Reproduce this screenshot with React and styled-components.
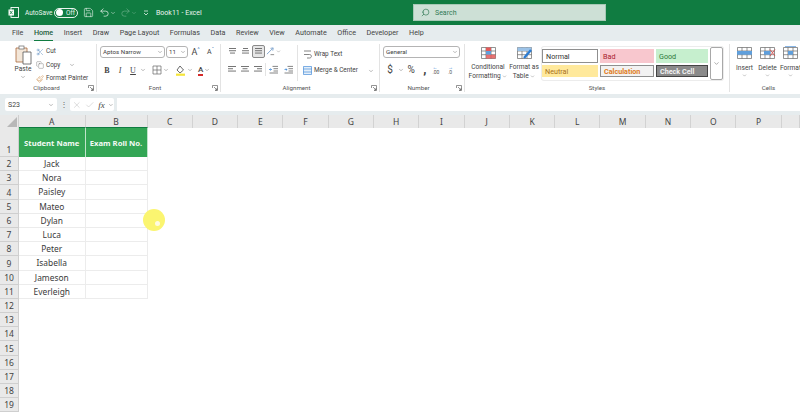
import React from 'react'
import styled, { createGlobalStyle } from 'styled-components'
import { Search, ChevronDown, Scissors, Copy, Paintbrush, Undo2, Redo2, X, Check, Save } from 'lucide-react'

const GlobalStyle = createGlobalStyle`
  html, body { margin: 0; padding: 0; background: #fff; overflow: hidden; }
  body { font-family: Roboto, "Noto Sans", sans-serif; color: #333; }
`

const tabs = ['File', 'Home', 'Insert', 'Draw', 'Page Layout', 'Formulas', 'Data', 'Review', 'View', 'Automate', 'Office', 'Developer', 'Help']
const students = ['Jack', 'Nora', 'Paisley', 'Mateo', 'Dylan', 'Luca', 'Peter', 'Isabella', 'Jameson', 'Everleigh']
const columns = ['C', 'D', 'E', 'F', 'G', 'H', 'I', 'J', 'K', 'L', 'M', 'N', 'O', 'P']

const Chev = ({ size = 6 }) => <ChevronDown size={size} strokeWidth={1.6} color="#555" />

const Launcher = () => (
  <LauncherBox width="6" height="6" viewBox="0 0 6 6">
    <path d="M.5 3V.5H5.5V5.5H3M2 2l3 3M5 3v2H3" fill="none" stroke="#666" strokeWidth=".7" />
  </LauncherBox>
)

const AlignIcon = ({ lines }) => (
  <svg width="9" height="9" viewBox="0 0 9 9">
    {lines.map((l, i) => (
      <rect key={i} x={l[0]} y={1 + i * 2.3} width={l[1]} height=".9" fill="#666" />
    ))}
  </svg>
)

const SheetIcon = ({ children }) => (
  <svg width="17" height="14" viewBox="0 0 17 14">
    <path d="M1.5 1.5H15.5V12.5H1.5ZM1.5 5H15.5M1.5 8.7H15.5M6 1.5V12.5M11 1.5V12.5" fill="#fff" stroke="#666" strokeWidth=".7" />
    {children}
  </svg>
)

function TitleBar() {
  return (
    <TopBar>
      <ExcelMark width="11" height="11" viewBox="0 0 11 11">
        <rect x="3" y=".5" width="7.5" height="10" fill="none" stroke="#fff" strokeWidth=".9" />
        <rect x=".5" y="2.5" width="5.5" height="6" fill="#fff" />
        <path d="M1.8 3.8 4.6 7.2M4.6 3.8 1.8 7.2" stroke="#107c41" strokeWidth=".8" />
      </ExcelMark>
      <AutoSave>AutoSave</AutoSave>
      <Toggle>
        <Knob />
        <span>Off</span>
      </Toggle>
      <QuickIcons>
        <QuickSlot><Save size={11} strokeWidth={1.3} color="#f2f8f4" /></QuickSlot>
        <QuickSlot offset={5}><Undo2 size={11} strokeWidth={1.5} color="#f2f8f4" /></QuickSlot>
        <QuickSlot><ChevronDown size={6} color="#e3efe8" /></QuickSlot>
        <QuickSlot offset={3.5}><Redo2 size={11} strokeWidth={1.4} color="#6fb18d" /></QuickSlot>
        <QuickSlot><ChevronDown size={6} color="#6fb18d" /></QuickSlot>
        <QuickSlot offset={6}>
          <svg width="6" height="6" viewBox="0 0 6 6">
            <path d="M1 1H5M1 3 3 5 5 3" fill="none" stroke="#e3efe8" strokeWidth=".8" />
          </svg>
        </QuickSlot>
      </QuickIcons>
      <DocName>Book11 - Excel</DocName>
      <SearchBox>
        <Search size={9} strokeWidth={1.6} color="#1f6b45" style={{ transform: 'scaleX(-1)' }} />
        <span>Search</span>
      </SearchBox>
    </TopBar>
  )
}

function Clipboard() {
  return (
    <Group width={92}>
      <GroupBody>
        <PasteCol>
          <svg width="17" height="20" viewBox="0 0 17 20">
            <path d="M1 3H12V17H1Z" fill="#f3e6d8" stroke="#a9683a" strokeWidth=".8" />
            <rect x="4" y="1" width="5" height="3" fill="#fff" stroke="#666" strokeWidth=".7" />
            <path d="M8 7H16V19H8Z" fill="#fff" stroke="#555" strokeWidth=".8" />
          </svg>
          <Caption>Paste</Caption>
          <Chev />
        </PasteCol>
        <ClipList>
          <ClipItem><Scissors size={8} strokeWidth={1.2} color="#3f78b5" />Cut</ClipItem>
          <ClipItem><Copy size={8} strokeWidth={1.1} color="#555" />Copy<CopyChev><Chev /></CopyChev></ClipItem>
          <ClipItem><Paintbrush size={8} strokeWidth={1.3} color="#c9823a" />Format Painter</ClipItem>
        </ClipList>
      </GroupBody>
      <GroupLabel>Clipboard<Launcher /></GroupLabel>
    </Group>
  )
}

function FontGroup() {
  return (
    <Group width={124} divided>
      <GroupBody>
        <Stack>
          <ToolRow>
            <Combo width={65}>Aptos Narrow<Chev /></Combo>
            <Combo width={22}>11<Chev /></Combo>
            <GrowFont>A<sup>^</sup></GrowFont>
            <GrowFont small>A<sup>ˇ</sup></GrowFont>
          </ToolRow>
          <ToolRow tight>
            <StyleBtn bold>B</StyleBtn>
            <StyleBtn italic>I</StyleBtn>
            <StyleBtn underline>U</StyleBtn>
            <Chev />
            <svg width="10" height="10" viewBox="0 0 10 10" style={{ marginLeft: 5 }}>
              <path d="M1 1H9V9H1ZM5 1V9M1 5H9" fill="none" stroke="#666" strokeWidth=".7" />
            </svg>
            <Chev />
            <svg width="11" height="11" viewBox="0 0 11 11" style={{ marginLeft: 5 }}>
              <path d="M5 1 8.5 5 5 8 2 5Z" fill="none" stroke="#444" strokeWidth=".8" />
              <rect x="1" y="8.6" width="9" height="2.2" fill="#f5e53a" />
            </svg>
            <Chev />
            <ColorA>A</ColorA>
            <Chev />
          </ToolRow>
        </Stack>
      </GroupBody>
      <GroupLabel>Font<Launcher /></GroupLabel>
    </Group>
  )
}

function Alignment() {
  return (
    <Group width={159} divided>
      <GroupBody>
        <AlignGrid>
          <AlignCell><AlignIcon lines={[[1, 7], [1, 7], [2, 5]]} /></AlignCell>
          <AlignCell><AlignIcon lines={[[2, 5], [1, 7], [1, 7]]} /></AlignCell>
          <AlignCell selected><AlignIcon lines={[[1, 7], [1, 7], [1, 7]]} /></AlignCell>
          <AlignCell>
            <svg width="9" height="9" viewBox="0 0 10 10">
              <path d="M1 8 7 2M5 1.5 8 1l-.5 3" fill="none" stroke="#3f78b5" strokeWidth=".7" />
              <path d="M5 8.5h4" stroke="#666" strokeWidth=".8" />
            </svg>
            <Chev size={5} />
          </AlignCell>
          <AlignCell />
          <AlignCell><AlignIcon lines={[[0, 8], [0, 5], [0, 8]]} /></AlignCell>
          <AlignCell><AlignIcon lines={[[0, 8], [1.5, 5], [0, 8]]} /></AlignCell>
          <AlignCell><AlignIcon lines={[[0, 8], [3, 5], [0, 8]]} /></AlignCell>
          <AlignCell ruled>
            <svg width="9" height="9" viewBox="0 0 9 9">
              <path d="M3.5 1.4H9M4.5 3.7H9M4.5 6H9M.5 8H9" stroke="#666" strokeWidth=".8" />
              <path d="M3 4.5H.5M1.6 3.4.5 4.5 1.6 5.6" fill="none" stroke="#2b7cd3" strokeWidth=".7" />
            </svg>
          </AlignCell>
          <AlignCell>
            <svg width="9" height="9" viewBox="0 0 9 9">
              <path d="M3.5 1.4H9M4.5 3.7H9M4.5 6H9M.5 8H9" stroke="#666" strokeWidth=".8" />
              <path d="M.5 4.5H3M1.9 3.4 3 4.5 1.9 5.6" fill="none" stroke="#2b7cd3" strokeWidth=".7" />
            </svg>
          </AlignCell>
        </AlignGrid>
        <MergeCol>
          <ClipItem>
            <svg width="9" height="9" viewBox="0 0 9 9">
              <path d="M1 1H8M1 4.5H6.5C9 4.5 9 8 6.5 8H4" fill="none" stroke="#666" strokeWidth=".8" />
            </svg>
            Wrap Text
          </ClipItem>
          <ClipItem>
            <svg width="9" height="9" viewBox="0 0 9 9">
              <path d="M.5.5H8.5V8.5H.5ZM.5 3H8.5M.5 6H8.5" fill="#e5eff9" stroke="#2b7cd3" strokeWidth=".6" />
            </svg>
            Merge &amp; Center
            <MergeChev><Chev /></MergeChev>
          </ClipItem>
        </MergeCol>
      </GroupBody>
      <GroupLabel>Alignment<Launcher /></GroupLabel>
    </Group>
  )
}

function NumberGroup() {
  return (
    <Group width={85} divided>
      <GroupBody>
        <Stack>
          <Combo width={77}>General<Chev /></Combo>
          <ToolRow number>
            <NumGlyph>$</NumGlyph>
            <Chev />
            <NumGlyph>%</NumGlyph>
            <NumGlyph heavy>,</NumGlyph>
            <Decimal><i>←</i>.00</Decimal>
            <Decimal><i>→</i>.0</Decimal>
          </ToolRow>
        </Stack>
      </GroupBody>
      <GroupLabel>Number<Launcher /></GroupLabel>
    </Group>
  )
}

function Styles() {
  return (
    <Group width={265} divided>
      <GroupBody>
        <BigButton width={40}>
          <SheetIcon>
            <rect x="6" y="1.5" width="5" height="3.5" fill="#e45a5a" />
            <rect x="6" y="5" width="5" height="3.7" fill="#5f9fdc" />
            <rect x="6" y="8.7" width="9.5" height="3.8" fill="#e45a5a" opacity=".85" />
          </SheetIcon>
          <Caption>Conditional</Caption>
          <Caption>Formatting <Inline><Chev size={5} /></Inline></Caption>
        </BigButton>
        <BigButton width={30}>
          <SheetIcon>
            <rect x="1.5" y="1.5" width="14" height="3.5" fill="#9cc3e8" />
            <path d="M8 12 15 4" stroke="#2b7cd3" strokeWidth="2.4" />
          </SheetIcon>
          <Caption>Format as</Caption>
          <Caption>Table <Inline><Chev size={5} /></Inline></Caption>
        </BigButton>
        <Gallery>
          <StyleGrid>
            <Swatch kind="normal">Normal</Swatch>
            <Swatch kind="bad">Bad</Swatch>
            <Swatch kind="good">Good</Swatch>
            <Swatch kind="neutral">Neutral</Swatch>
            <Swatch kind="calc">Calculation</Swatch>
            <Swatch kind="check">Check Cell</Swatch>
          </StyleGrid>
          <GalleryMore><Chev size={7} /></GalleryMore>
        </Gallery>
      </GroupBody>
      <GroupLabel center>Styles</GroupLabel>
    </Group>
  )
}

function Cells() {
  return (
    <Group width={71} divided>
      <GroupBody>
        <CellButton>
          <SheetIcon><rect x="1" y="5" width="15" height="3.7" fill="#5f9fdc" /></SheetIcon>
          <Caption>Insert</Caption><Chev size={5} />
        </CellButton>
        <CellButton>
          <SheetIcon>
            <rect x="5" y="5" width="6.5" height="3.7" fill="#5f9fdc" />
            <path d="M11 3.5 16 10M16 3.5 11 10" stroke="#d9534f" strokeWidth=".9" />
          </SheetIcon>
          <Caption>Delete</Caption><Chev size={5} />
        </CellButton>
        <CellButton>
          <SheetIcon>
            <rect x="6" y="5" width="5" height="3.7" fill="#5f9fdc" />
            <path d="M3 .3H14" stroke="#2b7cd3" strokeWidth=".7" />
          </SheetIcon>
          <Caption>Format</Caption><Chev size={5} />
        </CellButton>
      </GroupBody>
      <GroupLabel shifted>Cells</GroupLabel>
    </Group>
  )
}

function App() {
  return (
    <Page>
      <GlobalStyle />
      <TitleBar />
      <TabRow>
        {tabs.map((t) => (
          <Tab key={t} $active={t === 'Home'}>{t}</Tab>
        ))}
      </TabRow>
      <Ribbon>
        <Clipboard />
        <FontGroup />
        <Alignment />
        <NumberGroup />
        <Styles />
        <Cells />
      </Ribbon>
      <FormulaBar>
        <NameBox>S23<Chev /></NameBox>
        <Dots>⋮</Dots>
        <FxBox>
          <X size={10} strokeWidth={1} color="#aaa" />
          <Check size={10} strokeWidth={1} color="#aaa" />
          <Fx>fx</Fx>
          <Chev />
        </FxBox>
        <FormulaInput />
      </FormulaBar>
      <Sheet>
        <Corner><Triangle /></Corner>
        <ColHead $active>A</ColHead>
        <ColHead $active>B</ColHead>
        {columns.map((c) => <ColHead key={c}>{c}</ColHead>)}
        <ColHead />

        <RowHead>1</RowHead>
        <HeaderCell>Student Name</HeaderCell>
        <HeaderCell>Exam Roll No.</HeaderCell>
        <Blank />

        {students.map((name, i) => (
          <React.Fragment key={name}>
            <RowHead>{i + 2}</RowHead>
            <DataCell>{name}</DataCell>
            <DataCell />
            <Blank />
          </React.Fragment>
        ))}

        {[12, 13, 14, 15, 16, 17, 18, 19].map((n) => (
          <React.Fragment key={n}>
            <RowHead>{n}</RowHead>
            <Blank $wide />
          </React.Fragment>
        ))}
      </Sheet>
      <Pointer>
        <PointerDot />
      </Pointer>
    </Page>
  )
}

const Page = styled.div`
  position: relative;
  width: 800px;
  height: 415px;
  overflow: hidden;
  background: #fff;
`

const TopBar = styled.div`
  height: 25px;
  background: #107c41;
  display: flex;
  align-items: center;
  padding-left: 8px;
  color: #eaf4ee;
  font-size: 7px;
`

const ExcelMark = styled.svg`
  margin-right: 6px;
`

const AutoSave = styled.span`
  width: 29px;
  font-size: 6.5px;
  white-space: nowrap;
`

const Toggle = styled.div`
  width: 24px;
  height: 10px;
  box-sizing: border-box;
  border: 1px solid #eaf4ee;
  border-radius: 6px;
  display: flex;
  align-items: center;
  gap: 3px;
  padding-left: 1px;
  font-size: 6.5px;
`

const Knob = styled.div`
  width: 7px;
  height: 7px;
  border-radius: 50%;
  background: #fff;
`

const QuickIcons = styled.div`
  display: flex;
  align-items: center;
  margin-left: 5px;
  width: 73px;
  flex: none;
`

const QuickSlot = styled.span`
  display: flex;
  margin-left: ${(p) => p.offset || 0}px;
`

const DocName = styled.span`
  width: 257px;
  flex: none;
  white-space: nowrap;
  font-size: 7px;
`

const SearchBox = styled.div`
  width: 193px;
  height: 17px;
  box-sizing: border-box;
  background: #cde0d6;
  border: 1px solid #a7c9b6;
  display: flex;
  align-items: center;
  gap: 5px;
  padding-left: 7px;
  color: #2f7a55;
  font-size: 7px;
`

const TabRow = styled.div`
  height: 16px;
  background: #e6ecee;
  display: flex;
  align-items: center;
  gap: 10.6px;
  padding-left: 12px;
  font-size: 7.2px;
  color: #444;
`

const Tab = styled.span`
  line-height: 16px;
  white-space: nowrap;
  font-weight: ${(p) => (p.$active ? 500 : 400)};
  color: ${(p) => (p.$active ? '#1e5c3c' : '#444')};
  border-bottom: ${(p) => (p.$active ? '1.5px solid #107c41' : 'none')};
  box-sizing: border-box;
  height: 16px;
`

const Ribbon = styled.div`
  height: 53px;
  margin-left: 4px;
  background: #fff;
  border-radius: 4px 0 0 4px;
  display: flex;
  padding: 3px 0 2px;
  box-sizing: border-box;
`

const Group = styled.div`
  box-sizing: border-box;
  width: ${(p) => p.width}px;
  flex: none;
  display: flex;
  flex-direction: column;
  border-left: ${(p) => (p.divided ? '1px solid #e3e3e3' : 'none')};
`

const GroupBody = styled.div`
  flex: 1;
  display: flex;
  min-height: 0;
  padding: 1px 3px 0;
`

const GroupLabel = styled.div`
  height: 9px;
  display: flex;
  align-items: center;
  justify-content: center;
  padding: ${(p) => (p.center ? '0' : p.shifted ? '0 0 0 7px' : '0 7px 0 0')};
  font-size: 6.2px;
  color: #555;
  position: relative;
  white-space: nowrap;
`

const LauncherBox = styled.svg`
  position: absolute;
  right: 2px;
  top: 2px;
`

const Caption = styled.span`
  font-size: 6.6px;
  line-height: 9px;
  white-space: nowrap;
  color: #444;
`

const Inline = styled.span`
  display: inline-flex;
  vertical-align: middle;
`

const PasteCol = styled.div`
  width: 26px;
  margin-left: 3px;
  display: flex;
  flex-direction: column;
  align-items: center;
`

const ClipList = styled.div`
  padding-top: 2px;
  display: flex;
  flex-direction: column;
  gap: 4.5px;
`

const ClipItem = styled.div`
  display: flex;
  align-items: center;
  gap: 2px;
  font-size: 6.4px;
  line-height: 9px;
  white-space: nowrap;
  color: #444;
`

const CopyChev = styled.span`
  display: flex;
  margin-left: 7px;
`

const Stack = styled.div`
  display: flex;
  flex-direction: column;
  gap: 6px;
  padding-top: 1px;
`

const ToolRow = styled.div`
  display: flex;
  align-items: center;
  gap: 1px;
  height: 12px;
  padding-left: ${(p) => (p.tight ? '1px' : '0')};
  ${(p) => p.number && 'padding-left: 1px; gap: 1.6px;'}
`

const Combo = styled.div`
  width: ${(p) => p.width}px;
  height: 12px;
  box-sizing: border-box;
  border: 1px solid #b4b4b4;
  border-radius: 3px;
  padding: 0 1px 0 2px;
  display: flex;
  align-items: center;
  justify-content: space-between;
  font-size: 6.2px;
  color: #444;
  background: #fff;
`

const GrowFont = styled.span`
  font-size: ${(p) => (p.small ? '7px' : '9px')};
  width: ${(p) => (p.small ? '15px' : '13px')};
  text-align: center;
  color: #444;
  sup {
    font-size: 5px;
    color: #3f78b5;
    line-height: 0;
  }
`

const StyleBtn = styled.span`
  width: 12px;
  text-align: center;
  font-size: 8px;
  color: #444;
  font-family: "Liberation Serif", serif;
  font-weight: ${(p) => (p.bold ? 700 : 400)};
  font-style: ${(p) => (p.italic ? 'italic' : 'normal')};
  text-decoration: ${(p) => (p.underline ? 'underline' : 'none')};
`

const ColorA = styled.span`
  margin-left: 4px;
  font-size: 8px;
  line-height: 9px;
  font-weight: 500;
  color: #444;
  border-bottom: 2.5px solid #d42a2a;
`

const AlignGrid = styled.div`
  display: grid;
  grid-template-columns: 13px 13px 13px 16px 14px;
  grid-template-rows: 13px 13px;
  row-gap: 5px;
  margin-left: 2px;
  flex: none;
`

const AlignCell = styled.div`
  display: flex;
  align-items: center;
  justify-content: center;
  box-sizing: border-box;
  gap: 1px;
  ${(p) => p.selected && 'background: #e6e6e6; border: 1px solid #8a8a8a; border-radius: 2px;'}
  ${(p) => p.ruled && 'border-left: 1px solid #e3e3e3;'}
`

const MergeCol = styled.div`
  margin-left: 2px;
  padding-left: 5px;
  border-left: 1px solid #e3e3e3;
  height: 36px;
  display: flex;
  flex-direction: column;
  gap: 7px;
  padding-top: 5px;
  box-sizing: border-box;
`

const MergeChev = styled.span`
  display: flex;
  margin-left: 8px;
`

const NumGlyph = styled.span`
  width: 12px;
  text-align: center;
  font-size: ${(p) => (p.heavy ? '13px' : '10px')};
  font-weight: ${(p) => (p.heavy ? 700 : 400)};
  line-height: ${(p) => (p.heavy ? '6px' : '12px')};
  color: #444;
`

const Decimal = styled.span`
  width: 14px;
  font-size: 5px;
  line-height: 5px;
  color: #555;
  i {
    display: block;
    font-style: normal;
    color: #2b7cd3;
  }
`

const BigButton = styled.div`
  width: ${(p) => p.width}px;
  flex: none;
  display: flex;
  flex-direction: column;
  align-items: center;
  margin-right: 1px;
  padding-top: 1px;
  & > svg {
    margin-bottom: 3px;
  }
`

const Gallery = styled.div`
  display: flex;
  height: 33px;
  width: 181px;
  margin: 2px 0 0 2px;
  box-sizing: border-box;
  background: #fff;
  box-shadow: 0 0 0 1px #ececec;
  border-radius: 2px;
`

const StyleGrid = styled.div`
  display: grid;
  grid-template-columns: 56px 54px 52px;
  grid-template-rows: 14px 12px;
  gap: 2px 2px;
  padding-top: 2px;
  width: 168px;
`

const swatches = {
  normal: 'background:#fff;color:#333;border:1px solid #8f8f8f;',
  bad: 'background:#f8c7ce;color:#a8202c;',
  good: 'background:#c6efce;color:#2c7a3a;',
  neutral: 'background:#ffe99c;color:#a8701c;',
  calc: 'background:#f2f2f2;color:#e07a20;border:1px solid #8f8f8f;font-weight:700;',
  check: 'background:#8a8a8a;color:#f2f2f2;border:1px solid #444;font-weight:700;',
}

const Swatch = styled.div`
  box-sizing: border-box;
  padding-left: 3px;
  display: flex;
  align-items: center;
  font-size: 7.2px;
  overflow: hidden;
  white-space: nowrap;
  ${(p) => swatches[p.kind]}
`

const GalleryMore = styled.div`
  width: 13px;
  box-sizing: border-box;
  border: 1px solid #a8a8a8;
  border-radius: 2px;
  display: flex;
  align-items: center;
  justify-content: center;
`

const CellButton = styled.div`
  width: 23px;
  flex: none;
  display: flex;
  flex-direction: column;
  align-items: center;
  padding-top: 1px;
  & > svg:first-child {
    margin-bottom: 4px;
  }
`

const FormulaBar = styled.div`
  height: 21px;
  background: #e6ecee;
  display: flex;
  align-items: center;
  padding: 3px 0 3px 5px;
  box-sizing: border-box;
  gap: 1px;
`

const NameBox = styled.div`
  width: 52px;
  height: 13px;
  box-sizing: border-box;
  background: #fff;
  border-radius: 2px;
  display: flex;
  align-items: center;
  justify-content: space-between;
  padding: 0 3px 0 3px;
  font-size: 7px;
  color: #444;
`

const Dots = styled.span`
  width: 11px;
  text-align: center;
  font-size: 8px;
  color: #666;
`

const FxBox = styled.div`
  width: 44px;
  height: 13px;
  background: #fff;
  border-radius: 2px;
  display: flex;
  align-items: center;
  gap: 3.5px;
  padding-left: 2px;
  box-sizing: border-box;
`

const Fx = styled.span`
  font-family: "Liberation Serif", serif;
  font-style: italic;
  font-size: 9px;
  color: #444;
`

const FormulaInput = styled.div`
  flex: 1;
  height: 13px;
  margin-left: 2px;
  background: #fff;
`

const Sheet = styled.div`
  display: grid;
  grid-template-columns: 19px 66.5px 62px repeat(14, 45.3px) 1fr;
  grid-template-rows: 13px 29px repeat(18, 14.2px);
  font-family: "Noto Sans", sans-serif;
`

const Corner = styled.div`
  background: #e9e9e9;
  border-right: 1px solid #cfcfcf;
  display: flex;
  align-items: flex-end;
  justify-content: flex-end;
  padding: 0 1px 1px 0;
  box-sizing: border-box;
`

const Triangle = styled.div`
  width: 0;
  height: 0;
  border-left: 10px solid transparent;
  border-bottom: 10px solid #b8b8b8;
`

const ColHead = styled.div`
  background: #e9e9e9;
  border-right: 1px solid #d2d2d2;
  box-sizing: border-box;
  display: flex;
  align-items: center;
  justify-content: center;
  font-size: 8.5px;
  color: #444;
  border-bottom: ${(p) => (p.$active ? '1px solid #107c41' : 'none')};
`

const RowHead = styled.div`
  grid-column: 1;
  background: #e9e9e9;
  border-right: 1px solid #cfcfcf;
  border-bottom: 1px solid #cfcfcf;
  box-sizing: border-box;
  display: flex;
  align-items: flex-end;
  justify-content: center;
  font-size: 8.5px;
  line-height: 13px;
  color: #444;
`

const HeaderCell = styled.div`
  background: #33a655;
  color: #f2faf4;
  border-right: 1px solid #bfe4ca;
  box-sizing: border-box;
  display: flex;
  align-items: center;
  justify-content: center;
  font-size: 7.7px;
  font-weight: 700;
  white-space: nowrap;
`

const DataCell = styled.div`
  border-right: 1px solid #ececec;
  border-bottom: 1px solid #ececec;
  box-sizing: border-box;
  display: flex;
  align-items: center;
  justify-content: center;
  font-size: 8.4px;
  color: #3a3a3a;
`

const Blank = styled.div`
  grid-column: ${(p) => (p.$wide ? '2 / -1' : '4 / -1')};
  background: #fff;
`

const Pointer = styled.div`
  position: absolute;
  left: 143px;
  top: 209px;
  width: 22px;
  height: 22px;
  border-radius: 50%;
  background: #fbf570;
  display: flex;
  align-items: center;
  justify-content: center;
`

const PointerDot = styled.div`
  width: 5px;
  height: 5px;
  margin: 6px 0 0 7px;
  border-radius: 50%;
  background: #fffbe0;
`

export default App
